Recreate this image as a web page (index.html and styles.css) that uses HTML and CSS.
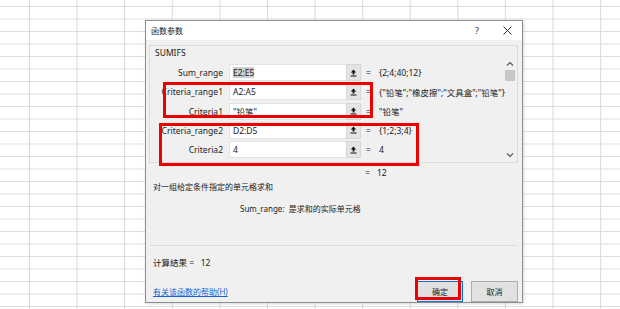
FILE: index.html
```html
<!DOCTYPE html>
<html lang="zh-CN">
<head>
    <meta charset="UTF-8">
    <title>函数参数</title>
    <link rel="stylesheet" href="styles.css">
</head>
<body>
    <div class="dialog">
        <div class="titlebar">
            <span class="title">函数参数</span>
            <span class="help">?</span>
            <span class="close">
                <svg width="9" height="9" viewBox="0 0 9 9"><path d="M0.5 0.5 L8.5 8.5 M8.5 0.5 L0.5 8.5" stroke="#333" stroke-width="1"/></svg>
            </span>
        </div>
        <div class="content">
            <div class="group">
                <div class="group-main">
                    <div class="func-name">SUMIFS</div>
                    <div class="args">
                        <div class="arg-label">Sum_range</div>
                        <div class="field"><span class="field-text"><span class="sel">E2:E5</span></span><span class="ref-btn"><svg width="7" height="8" viewBox="0 0 7 8"><path d="M3.5 0.5 L0.8 3.4 L2.6 3.4 L2.6 5.4 L4.4 5.4 L4.4 3.4 L6.2 3.4 Z" fill="#111"/><rect x="0.5" y="6.5" width="6" height="1" fill="#111"/></svg></span></div>
                        <div class="eq">=</div>
                        <div class="val">{2;4;40;12}</div>

                        <div class="arg-label">Criteria_range1</div>
                        <div class="field"><span class="field-text">A2:A5</span><span class="ref-btn"><svg width="7" height="8" viewBox="0 0 7 8"><path d="M3.5 0.5 L0.8 3.4 L2.6 3.4 L2.6 5.4 L4.4 5.4 L4.4 3.4 L6.2 3.4 Z" fill="#111"/><rect x="0.5" y="6.5" width="6" height="1" fill="#111"/></svg></span></div>
                        <div class="eq">=</div>
                        <div class="val">{"铅笔";"橡皮擦";"文具盒";"铅笔"}</div>

                        <div class="arg-label">Criteria1</div>
                        <div class="field"><span class="field-text">"铅笔"</span><span class="ref-btn"><svg width="7" height="8" viewBox="0 0 7 8"><path d="M3.5 0.5 L0.8 3.4 L2.6 3.4 L2.6 5.4 L4.4 5.4 L4.4 3.4 L6.2 3.4 Z" fill="#111"/><rect x="0.5" y="6.5" width="6" height="1" fill="#111"/></svg></span></div>
                        <div class="eq">=</div>
                        <div class="val">"铅笔"</div>

                        <div class="arg-label">Criteria_range2</div>
                        <div class="field"><span class="field-text">D2:D5</span><span class="ref-btn"><svg width="7" height="8" viewBox="0 0 7 8"><path d="M3.5 0.5 L0.8 3.4 L2.6 3.4 L2.6 5.4 L4.4 5.4 L4.4 3.4 L6.2 3.4 Z" fill="#111"/><rect x="0.5" y="6.5" width="6" height="1" fill="#111"/></svg></span></div>
                        <div class="eq">=</div>
                        <div class="val">{1;2;3;4}</div>

                        <div class="arg-label">Criteria2</div>
                        <div class="field"><span class="field-text">4</span><span class="ref-btn"><svg width="7" height="8" viewBox="0 0 7 8"><path d="M3.5 0.5 L0.8 3.4 L2.6 3.4 L2.6 5.4 L4.4 5.4 L4.4 3.4 L6.2 3.4 Z" fill="#111"/><rect x="0.5" y="6.5" width="6" height="1" fill="#111"/></svg></span></div>
                        <div class="eq">=</div>
                        <div class="val">4</div>
                    </div>
                </div>
                <div class="scrollbar">
                    <svg width="10" height="6" viewBox="0 0 10 6"><path d="M2 4.5 L5 1.5 L8 4.5" stroke="#555" stroke-width="1.2" fill="none"/></svg>
                    <div class="thumb"></div>
                    <div class="track"></div>
                    <svg width="10" height="6" viewBox="0 0 10 6"><path d="M2 1.5 L5 4.5 L8 1.5" stroke="#555" stroke-width="1.2" fill="none"/></svg>
                </div>
            </div>
            <div class="result-row"><span class="eq">=</span><span>12</span></div>
            <div class="desc">对一组给定条件指定的单元格求和</div>
            <div class="arg-desc">Sum_range:&nbsp;&nbsp;是求和的实际单元格</div>
            <div class="separator"></div>
            <div class="calc">计算结果 =&nbsp;&nbsp;&nbsp;12</div>
            <div class="footer">
                <a class="help-link" href="#">有关该函数的帮助(H)</a>
                <div class="buttons">
                    <button class="btn btn-default">确定</button>
                    <button class="btn">取消</button>
                </div>
            </div>
        </div>
    </div>
    <div class="mark mark-1"></div>
    <div class="mark mark-2"></div>
    <div class="mark mark-3"></div>
</body>
</html>
```

FILE: styles.css
```css
html {
    height: 100%;
}
body {
    margin: 0;
    height: 309px;
    overflow: hidden;
    position: relative;
    background-color: white;
    background-image:
        linear-gradient(to right, #d8d8d8 1px, transparent 1px),
        linear-gradient(to bottom, #dedede 1px, transparent 1px);
    background-size: 47.6px 100%, 100% 12.5px;
    background-position: 29px 0, 0 6px;
    font-family: "Noto Sans", "Noto Sans CJK SC", sans-serif;
    font-size: 8.5px;
    color: #1a1a1a;
}
.dialog {
    margin: 20px 0 0 145px;
    width: 378px;
    height: 283px;
    box-sizing: border-box;
    border: 1px solid #8e8e8e;
    background: #f0f0f0;
    display: flex;
    flex-direction: column;
    box-shadow: 1px 1px 3px rgba(0, 0, 0, 0.15);
}
.titlebar {
    height: 19px;
    background: white;
    display: flex;
    align-items: center;
    padding-left: 5px;
    flex-shrink: 0;
}
.titlebar .title {
    flex: 1;
    font-family: "Noto Sans CJK SC", sans-serif;
    font-size: 8px;
}
.titlebar .help {
    width: 30px;
    text-align: center;
    font-size: 9px;
    color: #333;
}
.titlebar .close {
    width: 30px;
    display: flex;
    justify-content: center;
}
.content {
    flex: 1;
    padding: 5px 4px 0 3px;
    display: flex;
    flex-direction: column;
}
.group {
    border: 1px solid #dcdcdc;
    height: 118px;
    box-sizing: border-box;
    display: flex;
}
.group-main {
    flex: 1;
    padding-left: 5px;
}
.func-name {
    height: 12px;
    line-height: 12px;
    margin-top: 1px;
    font-size: 8.5px;
}
.args {
    margin-top: 5px;
    display: grid;
    grid-template-columns: 68px 138px 18px 1fr;
    grid-auto-rows: 17px;
    row-gap: 2.3px;
    align-items: center;
}
.arg-label {
    text-align: right;
    color: #222;
    white-space: nowrap;
}
.field {
    display: flex;
    height: 17px;
    margin-left: 6px;
    width: 132px;
    box-sizing: border-box;
}
.field-text {
    flex: 1;
    background: white;
    border: 1px solid #e3e3e3;
    border-right: none;
    display: flex;
    align-items: center;
    padding-left: 3px;
    font-size: 8.5px;
}
.sel {
    background: #cdcdcd;
}
.ref-btn {
    width: 15px;
    background: #e4e4e4;
    border: 1px solid #d6d6d6;
    box-sizing: border-box;
    display: flex;
    align-items: center;
    justify-content: center;
}
.eq {
    padding-left: 5px;
}
.val {
    white-space: nowrap;
}
.scrollbar {
    width: 10px;
    margin: 15px 4px 4px 0;
    display: flex;
    flex-direction: column;
    align-items: center;
}
.scrollbar .thumb {
    width: 10px;
    height: 11px;
    margin-top: 3px;
    background: #c6c6c6;
}
.scrollbar .track {
    flex: 1;
}
.result-row {
    height: 12px;
    line-height: 12px;
    margin-top: 4px;
    padding-left: 216px;
}
.result-row .eq {
    padding-left: 0;
    margin-right: 7px;
}
.desc {
    height: 12px;
    line-height: 12px;
    margin-top: 2px;
    padding-left: 4px;
    font-size: 8px;
}
.arg-desc {
    height: 12px;
    line-height: 12px;
    margin-top: 10px;
    padding-left: 91px;
    font-size: 8px;
}
.separator {
    margin-top: 30px;
    margin-left: 1px;
    height: 1px;
    background: #dcdcdc;
}
.calc {
    height: 12px;
    line-height: 12px;
    margin-top: 11px;
    padding-left: 4px;
}
.footer {
    margin-top: 12px;
    display: flex;
    align-items: center;
    justify-content: space-between;
    padding-left: 4px;
}
.help-link {
    color: #1a62d6;
    text-decoration: underline;
    font-size: 8px;
}
.buttons {
    display: flex;
    gap: 8px;
}
.btn {
    height: 21px;
    width: 47px;
    border: 1px solid #adadad;
    background: #e1e1e1;
    font-family: "Noto Sans CJK SC", sans-serif;
    font-size: 8px;
    color: #1a1a1a;
    padding: 0;
}
.btn-default {
    width: 46px;
    border: 1px solid #0078d7;
}
.mark {
    position: absolute;
    border: 3px solid #ee0000;
    box-sizing: border-box;
}
.mark-1 {
    left: 163px;
    top: 82px;
    width: 210px;
    height: 36px;
}
.mark-2 {
    left: 159px;
    top: 123px;
    width: 260px;
    height: 43px;
}
.mark-3 {
    left: 415px;
    top: 277px;
    width: 46px;
    height: 23px;
}
```
